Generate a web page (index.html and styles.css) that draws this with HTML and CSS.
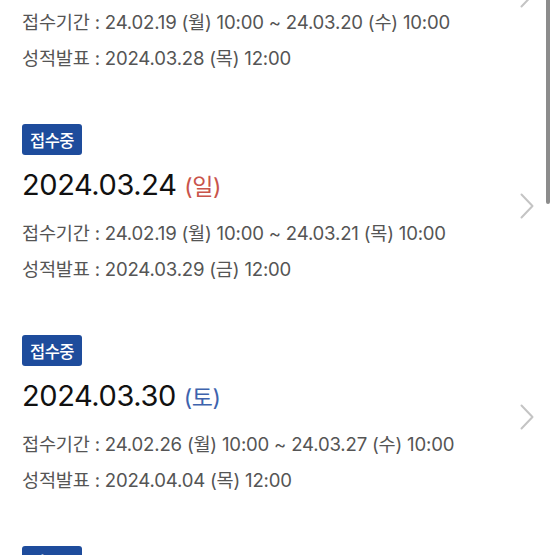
FILE: index.html
```html
<!DOCTYPE html>
<html lang="ko">
<head>
<meta charset="utf-8">
<link rel="stylesheet" href="styles.css">
</head>
<body>
<div class="screen">
  <ul class="list">
    <li class="item">
      <div class="content">
        <span class="badge">접수중</span>
        <div class="date">2024.03.22 <span class="day">(금)</span></div>
        <p class="info">접수기간 : 24.02.19 (월) 10:00 ~ 24.03.20 (수) 10:00</p>
        <p class="info">성적발표 : 2024.03.28 (목) 12:00</p>
      </div>
      <svg class="chev" width="14" height="26" viewBox="0 0 14 26"><path d="M1.5 1.5 L12.5 13 L1.5 24.5" fill="none" stroke="#c4c4c4" stroke-width="2" stroke-linecap="round" stroke-linejoin="round"/></svg>
    </li>
    <li class="item">
      <div class="content">
        <span class="badge">접수중</span>
        <div class="date">2024.03.24 <span class="day sun">(일)</span></div>
        <p class="info">접수기간 : 24.02.19 (월) 10:00 ~ 24.03.21 (목) 10:00</p>
        <p class="info">성적발표 : 2024.03.29 (금) 12:00</p>
      </div>
      <svg class="chev" width="14" height="26" viewBox="0 0 14 26"><path d="M1.5 1.5 L12.5 13 L1.5 24.5" fill="none" stroke="#c4c4c4" stroke-width="2" stroke-linecap="round" stroke-linejoin="round"/></svg>
    </li>
    <li class="item">
      <div class="content">
        <span class="badge">접수중</span>
        <div class="date">2024.03.30 <span class="day sat">(토)</span></div>
        <p class="info">접수기간 : 24.02.26 (월) 10:00 ~ 24.03.27 (수) 10:00</p>
        <p class="info">성적발표 : 2024.04.04 (목) 12:00</p>
      </div>
      <svg class="chev" width="14" height="26" viewBox="0 0 14 26"><path d="M1.5 1.5 L12.5 13 L1.5 24.5" fill="none" stroke="#c4c4c4" stroke-width="2" stroke-linecap="round" stroke-linejoin="round"/></svg>
    </li>
    <li class="item">
      <div class="content">
        <span class="badge">접수중</span>
        <div class="date">2024.04.06 <span class="day sat">(토)</span></div>
        <p class="info">접수기간 : 24.03.04 (월) 10:00 ~ 24.04.03 (수) 10:00</p>
        <p class="info">성적발표 : 2024.04.11 (목) 12:00</p>
      </div>
      <svg class="chev" width="14" height="26" viewBox="0 0 14 26"><path d="M1.5 1.5 L12.5 13 L1.5 24.5" fill="none" stroke="#c4c4c4" stroke-width="2" stroke-linecap="round" stroke-linejoin="round"/></svg>
    </li>
  </ul>
  <div class="scrollbar"></div>
</div>
</body>
</html>
```
FILE: styles.css
```css
html, body {
  margin: 0;
  padding: 0;
  background: #fff;
}
body {
  font-family: Inter, "Noto Sans CJK KR", sans-serif;
  color: #111;
}
.screen {
  position: relative;
  width: 555px;
  height: 555px;
  overflow: hidden;
}
.list {
  list-style: none;
  margin: -87px 0 0 0;
  padding: 0;
}
.item {
  display: flex;
  align-items: center;
  justify-content: space-between;
  padding: 0 21px 48px 22px;
}
.content {
  display: flex;
  flex-direction: column;
  align-items: flex-start;
}
.badge {
  display: inline-flex;
  align-items: center;
  justify-content: center;
  height: 31px;
  width: 60px;
  background: #1e4c9c;
  color: #fff;
  border-radius: 3px;
  font-family: "Noto Sans CJK KR", sans-serif;
  font-size: 16.5px;
  font-weight: 500;
  letter-spacing: -0.5px;
}
.date {
  margin-top: 10px;
  height: 40px;
  line-height: 40px;
  font-size: 29px;
  font-weight: 400;
  color: #111;
  letter-spacing: -0.4px;
}
.day {
  font-size: 23px;
  color: #444;
}
.day.sun { color: #c9544b; }
.day.sat { color: #3e63ad; }
.info {
  margin: 0;
  height: 36px;
  line-height: 36px;
  font-size: 18.6px;
  color: #555;
  letter-spacing: -0.2px;
}
.date + .info {
  margin-top: 10px;
}
.chev {
  display: block;
}
.scrollbar {
  position: absolute;
  left: 546px;
  top: -20px;
  width: 4px;
  height: 224px;
  border-radius: 2px;
  background: #8c8c8c;
}
```
